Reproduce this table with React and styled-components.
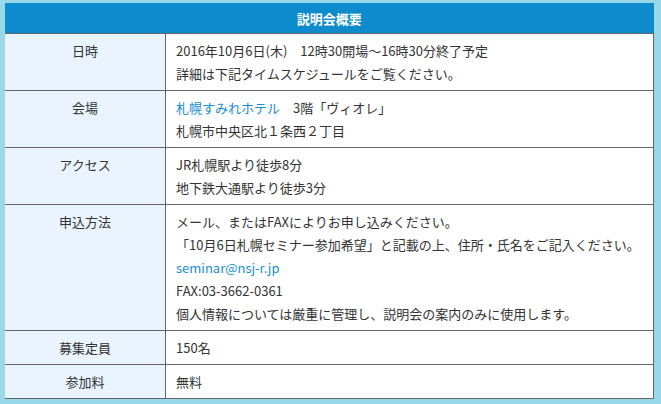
import React from "react";
import styled, { createGlobalStyle } from "styled-components";

const GlobalStyle = createGlobalStyle`
  body {
    margin: 0;
    background: #98d8ea;
    font-family: "Noto Sans CJK JP", "Noto Sans", sans-serif;
    color: #333;
  }
`;

const Wrap = styled.div`
  padding: 3px 5px 4px;
`;

const Table = styled.table`
  width: 649px;
  border-collapse: collapse;
  font-size: 13px;
  line-height: 23px;
`;

const HeadCell = styled.th`
  background: #0d8bcc;
  color: #fff;
  font-weight: bold;
  height: 30px;
  padding: 0;
  text-align: center;
  border-bottom: 1px solid #666;
`;

const Label = styled.th`
  width: 160px;
  background: #eaf4fe;
  font-weight: normal;
  text-align: center;
  vertical-align: top;
  padding: 5px 0;
  border-right: 1px solid #666;
  border-bottom: 1px solid #666;
`;

const Value = styled.td`
  background: #fff;
  text-align: left;
  vertical-align: top;
  padding: 5px 10px 5px 10px;
  border-right: 1px solid #666;
  border-bottom: 1px solid #666;
  white-space: nowrap;
`;

const Line = styled.div`
  height: 23px;
`;

const Link = styled.a`
  color: #1a8dd0;
  text-decoration: none;
`;

const rows = [
  {
    label: "日時",
    lines: [
      "2016年10月6日(木)　12時30開場～16時30分終了予定",
      "詳細は下記タイムスケジュールをご覧ください。",
    ],
  },
  {
    label: "会場",
    lines: [
      <>
        <Link href="#">札幌すみれホテル</Link>　3階「ヴィオレ」
      </>,
      "札幌市中央区北１条西２丁目",
    ],
  },
  {
    label: "アクセス",
    lines: ["JR札幌駅より徒歩8分", "地下鉄大通駅より徒歩3分"],
  },
  {
    label: "申込方法",
    lines: [
      "メール、またはFAXによりお申し込みください。",
      "「10月6日札幌セミナー参加希望」と記載の上、住所・氏名をご記入ください。",
      <Link href="#">seminar@nsj-r.jp</Link>,
      "FAX:03-3662-0361",
      "個人情報については厳重に管理し、説明会の案内のみに使用します。",
    ],
  },
  { label: "募集定員", lines: ["150名"] },
  { label: "参加料", lines: ["無料"] },
];

export default function App() {
  return (
    <>
      <GlobalStyle />
      <Wrap>
        <Table>
          <thead>
            <tr>
              <HeadCell colSpan={2}>説明会概要</HeadCell>
            </tr>
          </thead>
          <tbody>
            {rows.map((row) => (
              <tr key={row.label}>
                <Label>{row.label}</Label>
                <Value>
                  {row.lines.map((line, i) => (
                    <Line key={i}>{line}</Line>
                  ))}
                </Value>
              </tr>
            ))}
          </tbody>
        </Table>
      </Wrap>
    </>
  );
}
